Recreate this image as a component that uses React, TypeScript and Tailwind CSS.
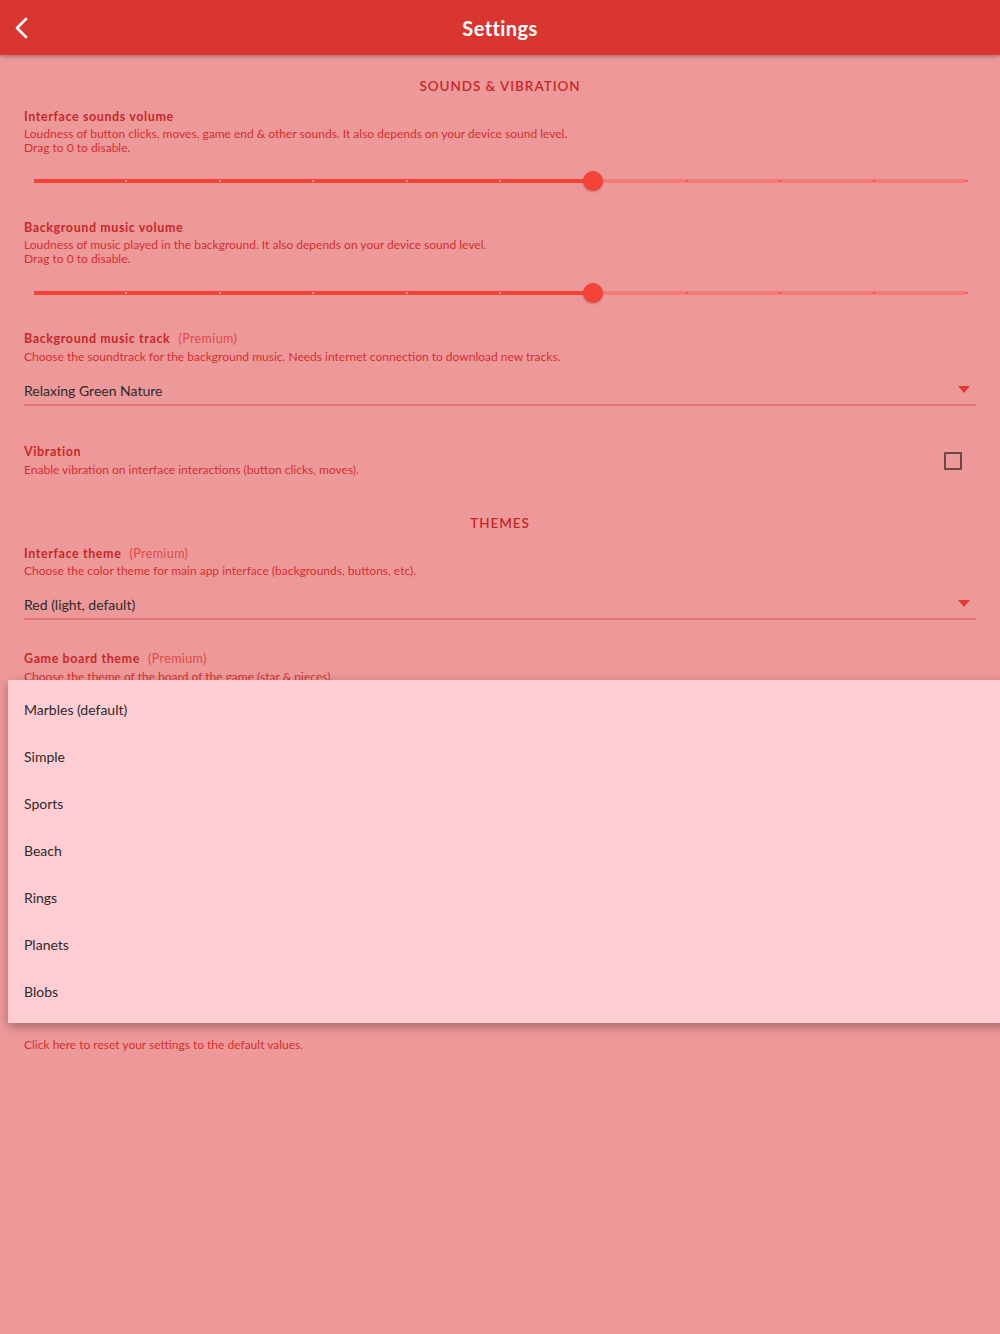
import React from 'react'

const FONT = { fontFamily: 'Lato, "Noto Sans", "Liberation Sans", sans-serif' }

const BOARD_THEMES = ['Marbles (default)', 'Simple', 'Sports', 'Beach', 'Rings', 'Planets', 'Blobs']

function SectionTitle({ children }: { children: React.ReactNode }) {
  return (
    <h2 className="text-center text-[13.5px] font-semibold tracking-[0.95px] text-[#C62828] leading-[18px]">
      {children}
    </h2>
  )
}

function ItemTitle({ title, premium }: { title: string; premium?: boolean }) {
  return (
    <p className="text-[12.5px] font-bold tracking-[0.6px] text-[#C62828] leading-[16px]">
      {title}
      {premium && <span className="ml-2 font-normal tracking-[0.4px] text-[#E04848]">(Premium)</span>}
    </p>
  )
}

function Desc({ children, tight }: { children: React.ReactNode; tight?: boolean }) {
  return (
    <p className={`text-[12px] text-[#D32F2F] leading-[14px] ${tight ? 'mt-[2px]' : 'mt-[3px]'}`}>{children}</p>
  )
}

function Slider({ value }: { value: number }) {
  const ticks = Array.from({ length: 11 }, (_, i) => i * 10)
  return (
    <div className="relative h-5 mx-[9px]">
      <div className="absolute left-0 right-0 top-[8px] h-[4px] rounded-full bg-[#F27B76]" />
      <div
        className="absolute left-0 top-[8px] h-[4px] rounded-full bg-[#F44336]"
        style={{ width: `${value}%` }}
      />
      {ticks.map((t) => (
        <span
          key={t}
          className={`absolute top-[9px] w-[2px] h-[2px] rounded-full -ml-[1px] ${t <= value ? 'bg-[#F8B4B0]' : 'bg-[#E5534D]'}`}
          style={{ left: `${t}%` }}
        />
      ))}
      <span
        className="absolute top-0 w-5 h-5 -ml-[10px] rounded-full bg-[#F44336] shadow-[0_1px_2px_rgba(0,0,0,0.25)]"
        style={{ left: `${value}%` }}
      />
    </div>
  )
}

function Select({ value }: { value: string }) {
  return (
    <div className="flex items-center h-[30px] border-b-2 border-[#E57373]">
      <span className="flex-1 text-[14px] text-[#2E2A2A]">{value}</span>
      <svg width="12" height="7" viewBox="0 0 12 7" className="mr-[6px] -mt-[1px]">
        <path d="M0 0h12L6 7z" fill="#E53935" />
      </svg>
    </div>
  )
}

export default function App() {
  return (
    <div className="relative min-h-[1334px] bg-[#EE9999] overflow-hidden" style={FONT}>
      <header className="relative z-10 h-[55px] bg-[#DB3530] flex items-center justify-center shadow-[0_2px_4px_rgba(0,0,0,0.25)]">
        <svg
          className="absolute left-[14px] top-[17px]"
          width="16"
          height="22"
          viewBox="0 0 16 22"
          fill="none"
          stroke="white"
          strokeWidth="2.6"
          strokeLinecap="round"
          strokeLinejoin="round"
        >
          <path d="M12 2L3 11l9 9" />
        </svg>
        <h1 className="text-white text-[20px] font-bold tracking-[0.4px]">Settings</h1>
      </header>

      <main className="px-6 pt-[22px]">
        <SectionTitle>SOUNDS &amp; VIBRATION</SectionTitle>

        <div className="mt-[14px]">
          <ItemTitle title="Interface sounds volume" />
          <Desc tight>
            Loudness of button clicks, moves, game end &amp; other sounds. It also depends on your device sound level.
            <br />
            Drag to 0 to disable.
          </Desc>
          <div className="mt-[16px]">
            <Slider value={60} />
          </div>
        </div>

        <div className="mt-[29px]">
          <ItemTitle title="Background music volume" />
          <Desc tight>
            Loudness of music played in the background. It also depends on your device sound level.
            <br />
            Drag to 0 to disable.
          </Desc>
          <div className="mt-[17px]">
            <Slider value={60} />
          </div>
        </div>

        <div className="mt-[28px]">
          <ItemTitle title="Background music track" premium />
          <Desc>Choose the soundtrack for the background music. Needs internet connection to download new tracks.</Desc>
          <div className="mt-[12px]">
            <Select value="Relaxing Green Nature" />
          </div>
        </div>

        <div className="mt-[38px] flex items-center">
          <div className="flex-1">
            <ItemTitle title="Vibration" />
            <Desc>Enable vibration on interface interactions (button clicks, moves).</Desc>
          </div>
          <span className="w-[18px] h-[18px] mr-[14px] border-2 border-[#6B4848] rounded-[1px]" />
        </div>

        <div className="mt-[37px]">
          <SectionTitle>THEMES</SectionTitle>
        </div>

        <div className="mt-[14px]">
          <ItemTitle title="Interface theme" premium />
          <Desc tight>Choose the color theme for main app interface (backgrounds, buttons, etc).</Desc>
          <div className="mt-[12px]">
            <Select value="Red (light, default)" />
          </div>
        </div>

        <div className="mt-[31px]">
          <ItemTitle title="Game board theme" premium />
          <Desc>Choose the theme of the board of the game (star &amp; pieces).</Desc>
          <div className="mt-[12px]">
            <Select value="Marbles (default)" />
          </div>
        </div>

        <div className="mt-[312px]">
          <p className="text-[12px] text-[#D32F2F] leading-[14px]">
            Click here to reset your settings to the default values.
          </p>
        </div>
      </main>

      <ul className="absolute left-[8px] top-[680px] w-[1000px] h-[343px] bg-[#FFCDD2] pt-[6px] z-20 shadow-[0_4px_10px_rgba(0,0,0,0.3)]">
        {BOARD_THEMES.map((name) => (
          <li key={name} className="h-[47px] flex items-center pl-4 text-[14px] text-[#2E2A2A]">
            {name}
          </li>
        ))}
      </ul>
    </div>
  )
}
